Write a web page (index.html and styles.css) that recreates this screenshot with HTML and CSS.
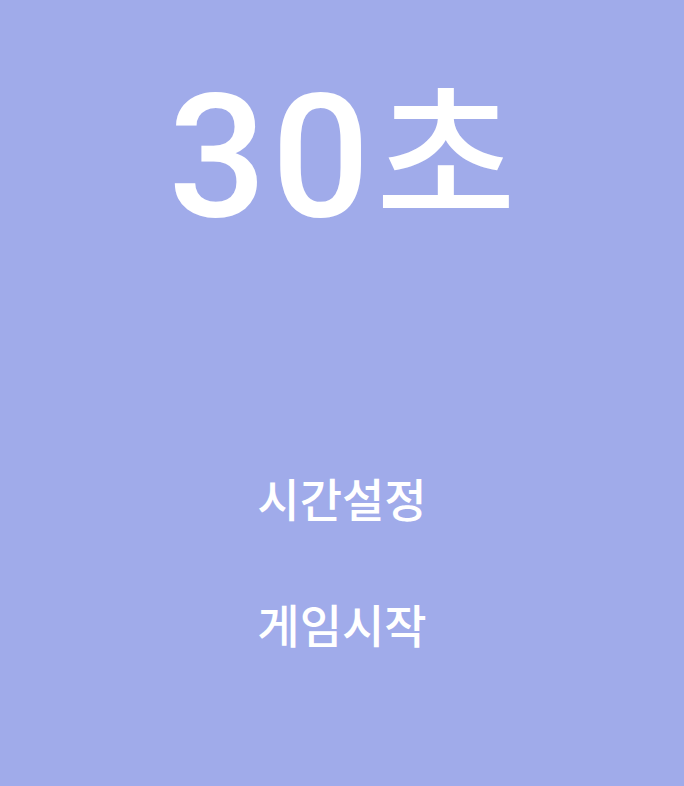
FILE: index.html
```html
<!DOCTYPE html>
<html lang="ko">
<head>
<meta charset="utf-8">
<link rel="stylesheet" href="styles.css">
</head>
<body>
<main class="screen">
  <div class="timer"><span class="num">30</span><span class="unit">초</span></div>
  <nav class="menu">
    <div class="menu-item">시간설정</div>
    <div class="menu-item">게임시작</div>
  </nav>
</main>
</body>
</html>
```
FILE: styles.css
```css
html, body {
  margin: 0;
  padding: 0;
  height: 100%;
  background: #a0abea;
}
.screen {
  display: flex;
  flex-direction: column;
  align-items: center;
  color: #ffffff;
  font-family: "Noto Sans CJK KR", sans-serif;
}
.timer {
  margin-top: 64px;
  height: 180px;
  display: flex;
  align-items: flex-end;
  white-space: nowrap;
}
.num {
  font-family: Roboto, "Liberation Sans", sans-serif;
  font-weight: 500;
  font-size: 173px;
  line-height: 1;
  letter-spacing: 5px;
}
.unit {
  font-family: "Noto Sans CJK KR", sans-serif;
  font-weight: 500;
  font-size: 152px;
  line-height: 1;
  margin-left: 1px;
  margin-bottom: 22px;
}
.menu {
  margin-top: 221px;
  display: flex;
  flex-direction: column;
  align-items: center;
  gap: 62px;
}
.menu-item {
  font-size: 46px;
  font-weight: 500;
  line-height: 64px;
}
```
